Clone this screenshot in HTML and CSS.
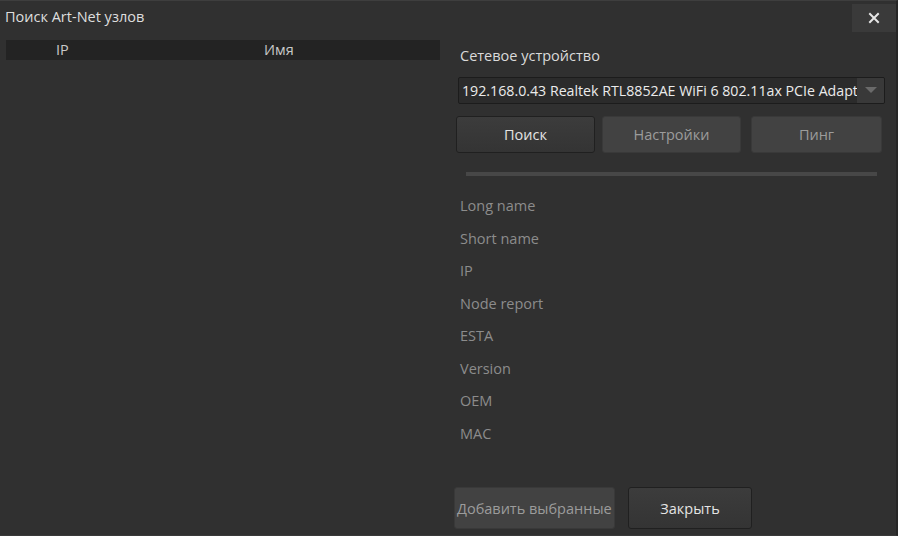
FILE: index.html
```html
<!DOCTYPE html>
<html lang="ru">
<head>
<meta charset="utf-8">
<title>Поиск Art-Net узлов</title>
<link rel="stylesheet" href="styles.css">
</head>
<body>
<div class="window">
  <div class="titlebar">
    <div class="title">Поиск Art-Net узлов</div>
    <div class="close">
      <svg width="12" height="12" viewBox="0 0 12 12"><path d="M2 2 L10 10 M10 2 L2 10" stroke="#e6e6e6" stroke-width="2" stroke-linecap="square"/></svg>
    </div>
  </div>
  <div class="content">
    <div class="left">
      <div class="table-head">
        <span class="col-ip">IP</span>
        <span class="col-name">Имя</span>
      </div>
    </div>
    <div class="right">
      <div class="caption">Сетевое устройство</div>
      <div class="select">
        <span class="select-text">192.168.0.43 Realtek RTL8852AE WiFi 6 802.11ax PCIe Adapter</span>
        <span class="select-arrow"><svg width="12" height="7" viewBox="0 0 12 7"><path d="M0 0 H12 L6 6 Z" fill="#6a6a6a"/></svg></span>
      </div>
      <div class="actions">
        <div class="btn btn-primary w-search">Поиск</div>
        <div class="btn btn-disabled w-settings">Настройки</div>
        <div class="btn btn-disabled w-ping">Пинг</div>
      </div>
      <div class="progress"></div>
      <div class="info">
        <div class="info-row">Long name</div>
        <div class="info-row">Short name</div>
        <div class="info-row">IP</div>
        <div class="info-row">Node report</div>
        <div class="info-row">ESTA</div>
        <div class="info-row">Version</div>
        <div class="info-row">OEM</div>
        <div class="info-row">MAC</div>
      </div>
      <div class="footer">
        <div class="btn btn-disabled w-add"><span class="add-label">Добавить выбранные узлы</span></div>
        <div class="btn btn-primary w-close">Закрыть</div>
      </div>
    </div>
  </div>
</div>
</body>
</html>
```

FILE: styles.css
```css
* { box-sizing: border-box; }

html, body {
  margin: 0;
  padding: 0;
  width: 898px;
  height: 536px;
  overflow: hidden;
  background: #303030;
}

body {
  font-family: "Open Sans", "Noto Sans", sans-serif;
  font-size: 14.5px;
  color: #dcdcdc;
}

.window {
  width: 898px;
  height: 536px;
  display: flex;
  flex-direction: column;
  background: #303030;
  border-top: 1px solid #3e3e3e;
  border-right: 2px solid #262626;
  border-bottom: 1px solid #3a3a3a;
}

.titlebar {
  height: 35px;
  display: flex;
  align-items: flex-start;
  justify-content: space-between;
}

.title {
  padding: 6px 0 0 5px;
  line-height: 20px;
  color: #dedede;
}

.close {
  width: 44px;
  height: 28px;
  margin-top: 3px;
  background: #3a3a3a;
  display: flex;
  align-items: center;
  justify-content: center;
}

.content {
  flex: 1;
  display: flex;
}

.left {
  width: 454px;
  padding: 4px 0 0 6px;
}

.table-head {
  width: 434px;
  height: 20px;
  background: #232323;
  position: relative;
  color: #c8c8c8;
  line-height: 20px;
}

.col-ip { position: absolute; left: 50px; top: 0; }
.col-name { position: absolute; left: 258px; top: 0; }

.right {
  width: 432px;
  display: flex;
  flex-direction: column;
  padding-top: 10px;
}

.caption {
  margin-left: 6px;
  line-height: 20px;
  color: #dadada;
}

.select {
  margin: 11px 0 0 4px;
  width: 427px;
  height: 27px;
  background: #2b2b2b;
  border: 1px solid #1c1c1c;
  border-radius: 2px;
  display: flex;
  align-items: stretch;
  overflow: hidden;
}

.select-text {
  flex: 1;
  padding-left: 3px;
  line-height: 25px;
  font-size: 14.2px;
  white-space: nowrap;
  overflow: hidden;
  color: #ebebeb;
}

.select-arrow {
  width: 27px;
  background: #393939;
  display: flex;
  align-items: center;
  justify-content: center;
}

.actions {
  margin: 12px 0 0 2px;
  display: flex;
}

.btn {
  height: 37px;
  display: flex;
  align-items: center;
  justify-content: center;
  border-radius: 3px;
  white-space: nowrap;
  overflow: hidden;
}

.btn-primary {
  background: linear-gradient(#3c3c3c, #343434);
  border: 1px solid #202020;
  color: #e4e4e4;
}

.btn-disabled {
  background: #424242;
  border: 1px solid #393939;
  color: #9c9c9c;
}

.w-search { width: 139px; }
.w-settings { width: 139px; margin-left: 7px; }
.w-ping { width: 131px; margin-left: 10px; }

.progress {
  margin: 19px 0 0 12px;
  width: 411px;
  height: 4px;
  background: #474747;
}

.info {
  margin: 14px 0 0 6px;
  color: #8c8c8c;
}

.info-row {
  height: 32.5px;
  line-height: 32px;
}

.footer {
  margin-top: auto;
  margin-bottom: 6px;
  display: flex;
}

.footer .btn { height: 42px; }

.w-add {
  width: 161px;
  justify-content: flex-start;
  padding-left: 2px;
}

.add-label {
  flex-shrink: 0;
}

.w-close { width: 124px; margin-left: 13px; }
```
